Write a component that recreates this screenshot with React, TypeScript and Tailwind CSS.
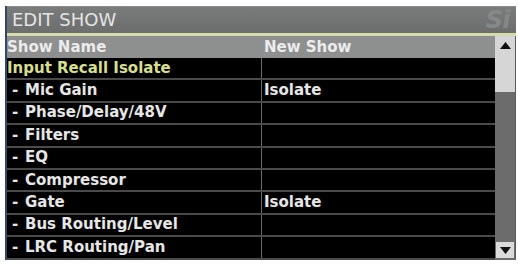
import React from 'react';

const ROWS: { name: string; value: string; group?: boolean }[] = [
  { name: 'Input Recall Isolate', value: '', group: true },
  { name: 'Mic Gain', value: 'Isolate' },
  { name: 'Phase/Delay/48V', value: '' },
  { name: 'Filters', value: '' },
  { name: 'EQ', value: '' },
  { name: 'Compressor', value: '' },
  { name: 'Gate', value: 'Isolate' },
  { name: 'Bus Routing/Level', value: '' },
  { name: 'LRC Routing/Pan', value: '' },
];

export default function App() {
  return (
    <div className="w-[518px] h-[265px] bg-white pt-[6px] pl-[5px] overflow-hidden" style={{ fontFamily: '"DejaVu Sans", "Liberation Sans", sans-serif' }}>
      <div className="w-[511px] h-[254px] flex flex-col border-l-2 border-[#34466a] bg-black">
        {/* title bar */}
        <div className="h-[27px] flex items-center justify-between bg-gradient-to-b from-[#7a7c7c] to-[#6c6e6e] border-t border-[#8a8c8c]">
          <span className="pl-[5px] text-[18px] leading-none text-[#e4e4e4]">EDIT SHOW</span>
          <span className="pr-[6px] text-[24px] leading-none italic font-bold text-[#858888] tracking-tight">Si</span>
        </div>
        <div className="h-[3px] bg-[#d4dcaa]" />

        <div className="flex flex-1 min-h-0">
          {/* table */}
          <div className="w-[488px] flex flex-col">
            <div className="h-[22px] flex items-center bg-[#8e8f8f] text-[15px] font-bold text-[#ececec] leading-none">
              <div className="w-[255px]">Show Name</div>
              <div className="pl-[2px]">New Show</div>
            </div>
            {ROWS.map((r, i) => (
              <div key={i} className="h-[22.4px] flex items-center border-b-2 border-[#4a4a4a] text-[15px] font-bold leading-none">
                <div className={`w-[255px] h-full flex items-center border-r border-[#6a6a6a] ${r.group ? 'text-[#d6df8c]' : 'text-[#e6e6e6] pl-[4px]'}`}>
                  {!r.group && <span className="inline-block w-[14px] pl-[1px]">-</span>}
                  {r.name}
                </div>
                <div className="pl-[2px] text-[#e6e6e6]">{r.value}</div>
              </div>
            ))}
          </div>

          {/* scrollbar */}
          <div className="w-[21px] flex flex-col bg-[#6c6c6c] border-r border-[#5a5a5a]">
            <div className="h-[56px] bg-[#d6d6d6] flex justify-center pt-[6px]">
              <svg width="11" height="7" viewBox="0 0 11 7"><path d="M5.5 0 L11 7 L0 7 Z" fill="#111" /></svg>
            </div>
            <div className="flex-1" />
            <div className="h-[16px] mb-[2px] mx-[1px] bg-[#dadada] flex items-center justify-center">
              <svg width="11" height="7" viewBox="0 0 11 7"><path d="M0 0 L11 0 L5.5 7 Z" fill="#111" /></svg>
            </div>
          </div>
        </div>
      </div>
    </div>
  );
}
